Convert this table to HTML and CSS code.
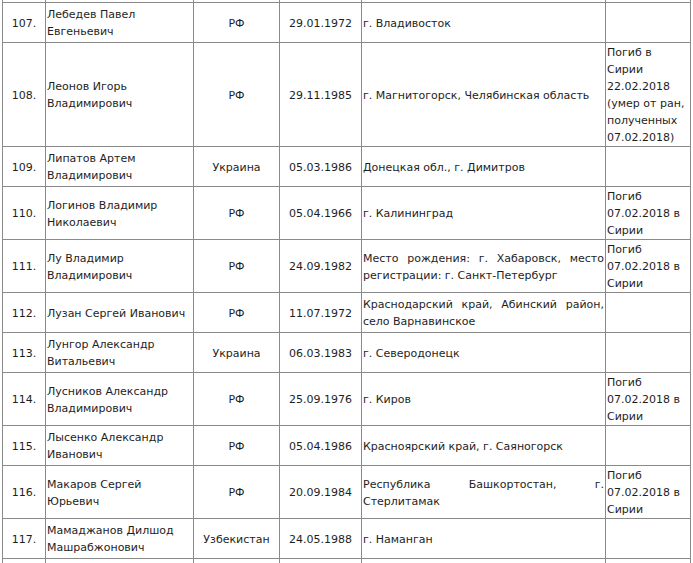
FILE: index.html
```html
<!DOCTYPE html>
<html lang="ru">
<head>
<meta charset="utf-8">
<title>Список</title>
<link rel="stylesheet" href="styles.css">
</head>
<body>
<table class="list">
<colgroup>
<col class="c-num"><col class="c-name"><col class="c-country"><col class="c-date"><col class="c-place"><col class="c-note">
</colgroup>
<tbody>
<tr class="stub"><td></td><td></td><td></td><td></td><td></td><td></td></tr>
<tr><td class="num">107.</td><td class="name">Лебедев Павел Евгеньевич</td><td class="ctr">РФ</td><td class="ctr">29.01.1972</td><td class="place">г. Владивосток</td><td class="note"></td></tr>
<tr><td class="num">108.</td><td class="name">Леонов Игорь Владимирович</td><td class="ctr">РФ</td><td class="ctr">29.11.1985</td><td class="place">г. Магнитогорск, Челябинская область</td><td class="note">Погиб в Сирии 22.02.2018 (умер от ран, полученных 07.02.2018)</td></tr>
<tr><td class="num">109.</td><td class="name">Липатов Артем Владимирович</td><td class="ctr">Украина</td><td class="ctr">05.03.1986</td><td class="place">Донецкая обл., г. Димитров</td><td class="note"></td></tr>
<tr><td class="num">110.</td><td class="name">Логинов Владимир Николаевич</td><td class="ctr">РФ</td><td class="ctr">05.04.1966</td><td class="place">г. Калининград</td><td class="note">Погиб 07.02.2018 в Сирии</td></tr>
<tr><td class="num">111.</td><td class="name">Лу Владимир Владимирович</td><td class="ctr">РФ</td><td class="ctr">24.09.1982</td><td class="place">Место рождения: г. Хабаровск, место регистрации: г. Санкт-Петербург</td><td class="note">Погиб 07.02.2018 в Сирии</td></tr>
<tr><td class="num">112.</td><td class="name">Лузан Сергей Иванович</td><td class="ctr">РФ</td><td class="ctr">11.07.1972</td><td class="place">Краснодарский край, Абинский район, село Варнавинское</td><td class="note"></td></tr>
<tr><td class="num">113.</td><td class="name">Лунгор Александр Витальевич</td><td class="ctr">Украина</td><td class="ctr">06.03.1983</td><td class="place">г. Северодонецк</td><td class="note"></td></tr>
<tr><td class="num">114.</td><td class="name">Лусников Александр Владимирович</td><td class="ctr">РФ</td><td class="ctr">25.09.1976</td><td class="place">г. Киров</td><td class="note">Погиб 07.02.2018 в Сирии</td></tr>
<tr><td class="num">115.</td><td class="name">Лысенко Александр Иванович</td><td class="ctr">РФ</td><td class="ctr">05.04.1986</td><td class="place">Красноярский край, г. Саяногорск</td><td class="note"></td></tr>
<tr><td class="num">116.</td><td class="name">Макаров Сергей Юрьевич</td><td class="ctr">РФ</td><td class="ctr">20.09.1984</td><td class="place">Республика Башкортостан, г. Стерлитамак</td><td class="note">Погиб 07.02.2018 в Сирии</td></tr>
<tr><td class="num">117.</td><td class="name">Мамаджанов Дилшод Машрабжонович</td><td class="ctr">Узбекистан</td><td class="ctr">24.05.1988</td><td class="place">г. Наманган</td><td class="note"></td></tr>
<tr class="tail"><td></td><td></td><td></td><td></td><td></td><td></td></tr>
</tbody>
</table>
</body>
</html>
```
FILE: styles.css
```css
html, body {
  margin: 0;
  padding: 0;
  background: #fff;
}
body {
  font-family: "DejaVu Sans", Verdana, sans-serif;
  font-size: 11px;
  line-height: 17px;
  color: #1e1e1e;
  overflow: hidden;
}
.list {
  border-collapse: collapse;
  table-layout: fixed;
  width: 689px;
  margin-left: 2px;
}
.c-num { width: 43px; }
.c-name { width: 148px; }
.c-country { width: 86px; }
.c-date { width: 82px; }
.c-place { width: 244px; }
.c-note { width: 85px; }
.list td {
  border: 1px solid #8a8a8a;
  padding: 1px 1px 0;
  vertical-align: middle;
}
.list tr { height: 40px; }
.list tr.stub { height: 2px; }
.list tr.stub td { border-top: 0; padding: 0; height: 2px; line-height: 0; }
.list tr.tail td { border-bottom: 0; }
.num { text-align: center; }
.name { text-align: left; }
.ctr { text-align: center; }
.place { text-align: justify; }
.note { text-align: left; }
```
